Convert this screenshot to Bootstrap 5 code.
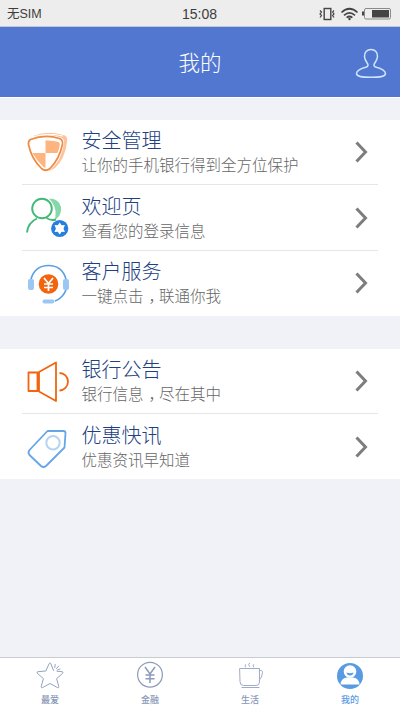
<!DOCTYPE html>
<html lang="zh-CN">

<head>
  <meta charset="UTF-8">
  <meta name="viewport" content="width=device-width, initial-scale=1.0">
  <title>我的</title>
  <link href="https://cdn.jsdelivr.net/npm/bootstrap@5.3.2/dist/css/bootstrap.min.css" rel="stylesheet">
  <style>
    body {
      background: #f0f2f7;
      font-family: "Liberation Sans", "Noto Sans CJK SC", sans-serif;
      height: 711px;
      overflow: hidden;
    }

    svg {
      display: block;
      fill: none;
    }

    .status-bar {
      height: 27px;
      background: #ededed;
      border-bottom: 1px solid #c3c7d2;
      color: #3c3c3c;
      font-size: 12.5px;
      padding: 1px 8px 0 7px;
    }

    .status-bar .clock {
      font-size: 14px;
      padding-top: 2px;
    }

    .status-bar .side {
      flex: 1 0 0;
    }

    .status-bar .carrier {
      padding-top: 2px;
    }

    .top-bar {
      height: 71px;
      background: #5277d1;
      border-bottom: 1px solid #fff;
      color: #fff;
      padding: 0 13px;
    }

    .top-bar h1 {
      font-size: 21.5px;
      font-weight: 300;
      line-height: 30px;
      margin-top: 4px;
    }

    .top-bar .side {
      width: 32px;
      padding-top: 2px;
    }

    .menu-group {
      background: #fff;
      padding: 0 22px;
    }

    .group-first {
      margin-top: 22px;
    }

    .group-second {
      margin-top: 33px;
    }

    .menu-row {
      height: 65px;
      padding: 8px 10px 0 3px;
    }

    .group-first .menu-row {
      height: 65.4px;
    }

    .menu-row + .menu-row {
      box-shadow: 0 -1px #e6e6e8;
      padding-top: 8.7px;
    }

    .menu-icon {
      width: 46px;
      height: 48px;
      margin-right: 10.5px;
    }

    .menu-text {
      padding-top: 1px;
    }

    .menu-title {
      font-size: 20px;
      line-height: 25px;
      font-weight: 300;
      color: #20407f;
    }

    .menu-sub {
      font-size: 15.5px;
      line-height: 24px;
      font-weight: 300;
      color: #666;
    }

    /* half-width comma, centred in a full-width cell */
    .comma {
      display: inline-block;
      width: 15.5px;
      padding-left: 5px;
      font-feature-settings: "halt";
    }

    .tab-bar {
      height: 54px;
      background: #fff;
      border-top: 1px solid #c9cbd1;
      color: #8696b5;
      font-size: 9px;
      font-weight: 500;
      line-height: 12px;
    }

    .tab-bar .active {
      color: #589be2;
    }

    .tab-bar svg {
      margin: 3px auto 5px;
    }
  </style>
</head>

<body class="d-flex flex-column">
  <div class="status-bar d-flex align-items-center">
    <div class="side carrier">无SIM</div>
    <div class="clock">15:08</div>
    <div class="side d-flex justify-content-end">
      <svg width="73" height="14" viewBox="0 0 73 14" stroke="#444">
        <rect x="5.2" y="1.5" width="6.6" height="11" stroke-width="1.4" />
        <path d="M1 3.500l1.500 1.500L1 7l1.500 1.600L1 10.500M15 3.500l-1.400 1.500L15 7l-1.400 1.600 1.400 1.900" stroke-width="1.200" />
        <path d="M22.500 5.500q8-7.500 16 0M25 8.300q5.500-5 11 0M27.600 10.700q2.900-2.400 5.800 0" stroke-width="1.700" />
        <circle cx="30.500" cy="12" r="1.200" fill="#444" stroke="none" />
        <rect x="45.500" y="1.500" width="26" height="10.500" rx="1.500" stroke="#8a8a8a" />
        <path d="M44 4.500v4" stroke-width="2" />
        <rect x="53" y="3" width="17" height="7.500" fill="#444" stroke="none" />
      </svg>
    </div>
  </div>

  <header class="top-bar d-flex align-items-center justify-content-between">
    <div class="side"></div>
    <h1 class="mb-0">我的</h1>
    <div class="side">
      <svg width="32" height="32" viewBox="0 0 32 32" stroke="#cfe5fb" stroke-width="1.500">
        <path d="M16 2.500c-4.200 0-6.700 3-6.500 7 .2 3.500 1.700 5.200 3 7 .9 1.300.6 3-1 3.500C6 21.500 1.500 23 1.500 26.500c0 3.500 6 3.700 14.500 3.700s14.500-.2 14.500-3.700c0-3.500-4.500-5-10-6.500-1.600-.5-1.900-2.200-1-3.500 1.300-1.800 2.800-3.500 3-7 .2-4-2.300-7-6.500-7z" />
      </svg>
    </div>
  </header>

  <main class="flex-grow-1">
    <section class="menu-group group-first">
      <div class="menu-row d-flex">
        <svg class="menu-icon" viewBox="0 0 46 48">
          <path d="M8 8Q24 2 40 7.500 43 9 42 14 40 31 30 40L24 43Z" fill="#fcc49c" />
          <path d="M4 11Q20 4 36 9.500 39.500 11 39 15 36.500 33 25.500 41.500 21 44.500 17.500 42 6 33 3 16 2.500 12.500 6 10.500Z" fill="#fff" />
          <path d="M6 9.500Q22 4 38 8" stroke="#fff" />
          <path d="M5.500 11.500Q20 6 34.500 10.500 38 12 37.500 16 34.500 31 25 40.500 20.500 44 16.500 40.500 6.500 31 3.500 16.500 3 13 5.500 11.500Z" stroke="#f08a42" stroke-width="1.700" />
          <path d="M20.500 12.500q8-.4 13 1.500 1.500.6 1.300 2.500-.5 4-2.300 8.500h-12zM7.500 25h13v14.500q-1 .2-2-.6-7-6.400-11-13.900z" fill="#fdb47f" />
        </svg>
        <div class="menu-text flex-grow-1 text-nowrap">
          <div class="menu-title">安全管理</div>
          <div class="menu-sub">让你的手机银行得到全方位保护</div>
        </div>
        <svg class="mt-1" width="13" height="38" viewBox="0 0 13 38" stroke="#7d7d7d" stroke-width="3">
          <path d="M1.500 10.500L10.500 20 1.500 29.500" />
        </svg>
      </div>
      <div class="menu-row d-flex">
        <svg class="menu-icon" viewBox="0 0 46 48">
          <path d="M24 4.500q10 0 12 8.500 1 9-6.500 13 1-2 1-5 1-9-6.500-16.500z" fill="#86d8a8" />
          <circle cx="17" cy="14.500" r="9.800" stroke="#43b978" stroke-width="1.900" />
          <path d="M2 38.500q1-10 10-14M21.500 24q4.500 3 9.500 1.500" stroke="#43b978" stroke-width="1.900" />
          <circle cx="34.700" cy="34.500" r="8.600" fill="#267fdd" />
          <path d="M34.700 28.500l1.900 2.700 3.300-.2-1.400 3.500 1.400 3.500-3.300-.2-1.900 2.700-1.900-2.700-3.300.2 1.400-3.500-1.400-3.500 3.300.2z" fill="#fff" />
        </svg>
        <div class="menu-text flex-grow-1 text-nowrap">
          <div class="menu-title">欢迎页</div>
          <div class="menu-sub">查看您的登录信息</div>
        </div>
        <svg class="mt-1" width="13" height="38" viewBox="0 0 13 38" stroke="#7d7d7d" stroke-width="3">
          <path d="M1.500 10.500L10.500 20 1.500 29.500" />
        </svg>
      </div>
      <div class="menu-row d-flex">
        <svg class="menu-icon" viewBox="0 0 46 48">
          <path d="M6 20C9 10 16 6.500 23.500 6.500S38 10 41 20M41 31c-2 5-5.500 9-11 11" stroke="#5b9fe6" stroke-width="1.700" />
          <rect x="3" y="20" width="6" height="11" rx="2" fill="#9bc7f2" />
          <rect x="38" y="20" width="6" height="11" rx="2" fill="#9bc7f2" />
          <rect x="17.500" y="40.500" width="12" height="4" rx="2" fill="#9bc7f2" />
          <circle cx="23.500" cy="25" r="9.800" fill="#f1650f" />
          <path d="M19 19l4.500 5.500L28 19M23.500 24.500V32M19 25h9M19 28.500h9" stroke="#fff" stroke-width="1.700" />
        </svg>
        <div class="menu-text flex-grow-1 text-nowrap">
          <div class="menu-title">客户服务</div>
          <div class="menu-sub">一键点击<span class="comma">，</span>联通你我</div>
        </div>
        <svg class="mt-1" width="13" height="38" viewBox="0 0 13 38" stroke="#7d7d7d" stroke-width="3">
          <path d="M1.500 10.500L10.500 20 1.500 29.500" />
        </svg>
      </div>
    </section>

    <section class="menu-group group-second">
      <div class="menu-row d-flex">
        <svg class="menu-icon" viewBox="0 0 46 48" stroke="#f1650f" stroke-width="1.800" stroke-linejoin="round">
          <path d="M3.500 15.500H14v18.500H3.500zM12.500 15.500v18.500M14 15L31 5.500v38.500L14 34.500M34.500 16c4.500 0 8.500 3.500 8.500 8.500s-4 9-8.500 9" />
        </svg>
        <div class="menu-text flex-grow-1 text-nowrap">
          <div class="menu-title">银行公告</div>
          <div class="menu-sub">银行信息<span class="comma">，</span>尽在其中</div>
        </div>
        <svg class="mt-1" width="13" height="38" viewBox="0 0 13 38" stroke="#7d7d7d" stroke-width="3">
          <path d="M1.500 10.500L10.500 20 1.500 29.500" />
        </svg>
      </div>
      <div class="menu-row d-flex">
        <svg class="menu-icon" viewBox="0 0 46 48" stroke="#65a5e9" stroke-width="1.800" stroke-linejoin="round">
          <path d="M22.500 8H38.500Q40.500 8 40.500 10L39.500 24.500 21 43Q18.500 45 16 43L4.500 32Q2.500 29.500 4.500 27Z" />
          <circle cx="28" cy="19.700" r="6.700" stroke="#b6d3f4" stroke-width="2" />
        </svg>
        <div class="menu-text flex-grow-1 text-nowrap">
          <div class="menu-title">优惠快讯</div>
          <div class="menu-sub">优惠资讯早知道</div>
        </div>
        <svg class="mt-1" width="13" height="38" viewBox="0 0 13 38" stroke="#7d7d7d" stroke-width="3">
          <path d="M1.500 10.500L10.500 20 1.500 29.500" />
        </svg>
      </div>
    </section>
  </main>

  <nav class="tab-bar d-flex text-center">
    <div class="col-3">
      <svg width="28" height="28" viewBox="0 0 28 28" stroke="#95a3be" stroke-linejoin="round" stroke-linecap="round">
        <path d="M17.500 9.500l-2.700-7q-.8-1.500-1.600 0L9.800 10 2 10.700q-1.800.4-.6 1.700l6 5.200L5.200 25.500q-.2 1.700 1.300 1.100L14 22.500l7.500 4.100q1.500.6 1.300-1.100l-2.200-7.900 6-5.200q1.200-1.300-.6-1.700l-5-.5M18.800 6.500l.4-3M20.500 7.500l2.200-2.500M21.500 9l2.500-1" />
      </svg>
      <div>最爱</div>
    </div>
    <div class="col-3">
      <svg width="28" height="28" viewBox="0 0 28 28" stroke="#8b9bbb">
        <circle cx="14" cy="13.700" r="12.400" stroke-width="1.200" />
        <path d="M9 6l5 7 5-7M14 13V22M9.500 14h9M9.500 17.700h9" stroke-width="1.500" />
      </svg>
      <div>金融</div>
    </div>
    <div class="col-3">
      <svg width="28" height="28" viewBox="0 0 28 28" stroke="#a0acc5" stroke-linecap="round">
        <path d="M4 7.500h19.500v13.500q0 3.500-3.500 3.500H7.500q-3.500 0-3.500-3.500zM23.500 9.500q3.500-.5 3 2-.4 5-3 7.500M6 26.500h17" />
        <path d="M9.500 3.500q-1 1 0 2.500M13.500 2q-2 1.500 0 3.500M17.500 3.500q-1 1 0 2.500" />
      </svg>
      <div>生活</div>
    </div>
    <div class="col-3 active">
      <svg width="28" height="28" viewBox="0 0 28 28">
        <circle cx="14" cy="15" r="13" fill="#589be2" />
        <circle cx="14" cy="10.500" r="6.300" fill="#fff" />
        <path d="M4.500 23.500q.5-6 6-7h7q5.500 1 6 7z" fill="#fff" />
        <path d="M10.500 11.500q3.500 1.500 7 0-.5 3-3.500 3t-3.500-3z" fill="#589be2" />
      </svg>
      <div>我的</div>
    </div>
  </nav>

  <script src="https://cdn.jsdelivr.net/npm/bootstrap@5.3.2/dist/js/bootstrap.bundle.min.js"></script>
</body>

</html>
